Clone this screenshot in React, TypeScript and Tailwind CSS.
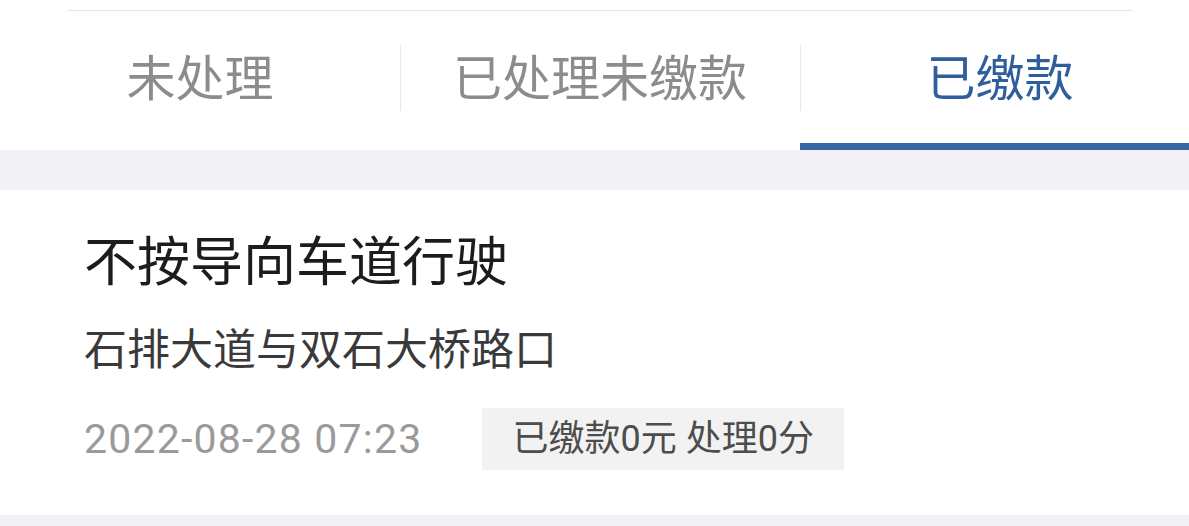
const tabs = ['未处理', '已处理未缴款', '已缴款']

export default function App() {
  const active = 2
  return (
    <div
      className="w-[1189px] h-[526px] overflow-hidden bg-[#f2f2f6]"
      style={{ fontFamily: 'Roboto, "Noto Sans CJK SC", sans-serif' }}
    >
      {/* Tabs */}
      <div className="bg-white pt-[10px]">
        <div className="ml-[67px] w-[1066px] h-px bg-[#e6e6e6]" />
        <div className="flex h-[139px] overflow-hidden">
          {tabs.map((t, i) => (
            <div key={t} className="relative w-[400px] shrink-0 flex items-center justify-center">
              {i > 0 && (
                <div className="absolute left-0 top-[34px] h-[66px] w-px bg-[#e8e8e8]" />
              )}
              <span
                className={`text-[49px] leading-none -mt-[2px] ${
                  i === active ? 'text-[#2e5f9c]' : 'text-[#8c8c8c]'
                }`}
              >
                {t}
              </span>
              {i === active && (
                <div className="absolute left-0 right-0 bottom-0 h-[7px] bg-[#3566a3]" />
              )}
            </div>
          ))}
        </div>
      </div>

      {/* Record */}
      <div className="mt-[40px] bg-white h-[325px] pl-[84px] pt-[43px]">
        <div className="text-[53px] leading-[60px] text-[#1c1c1c]">不按导向车道行驶</div>
        <div className="mt-[32px] text-[43px] leading-[50px] text-[#3a3a3a]">石排大道与双石大桥路口</div>
        <div className="mt-[33px] flex items-center gap-[60px]">
          <span className="text-[41px] leading-none text-[#9a9a9a] tracking-[1.2px]">2022-08-28 07:23</span>
          <span className="bg-[#f2f2f2] h-[62px] px-[30px] flex items-center text-[36px] text-[#4d4d4d]">
            已缴款0元 处理0分
          </span>
        </div>
      </div>
    </div>
  )
}
